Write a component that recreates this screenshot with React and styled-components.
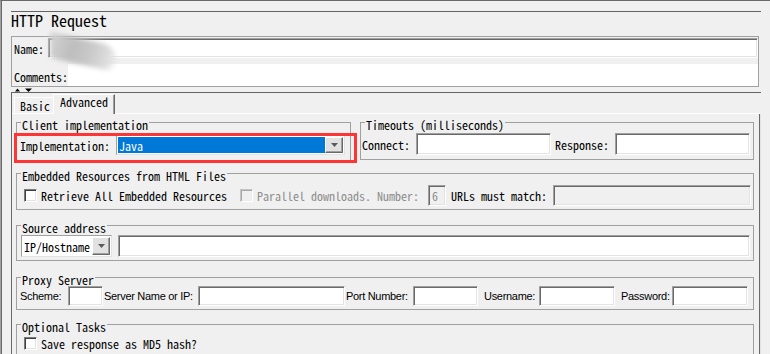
import React from "react";
import styled, { createGlobalStyle, css } from "styled-components";

const MONO = `"Noto Sans Mono CJK SC", "Noto Sans Mono CJK JP", "Liberation Mono", monospace`;
const SANS = `"Liberation Sans", Arial, sans-serif`;

const mono = css`
  font-family: ${MONO};
  font-size: 12px;
  white-space: nowrap;
`;

const sunken = css`
  border: 1px solid;
  border-color: #a0a0a0 #ffffff #ffffff #a0a0a0;
  box-shadow: inset 1px 1px 0 #696969, inset -1px -1px 0 #e3e3e3;
`;

const GlobalStyle = createGlobalStyle`
  html, body { margin: 0; padding: 0; background: #f0f0f0; }
  body { overflow: hidden; color: #000; font-family: ${MONO}; }
  *, *::before, *::after { box-sizing: border-box; }
`;

const Frame = styled.div`
  width: 770px;
  height: 354px;
  overflow: hidden;
  display: flex;
  flex-direction: column;
  padding: 10px 9px 0 10px;
  border-top: 1px solid #696969;
  border-left: 1px solid #a0a0a0;
  box-shadow: inset 1px 0 0 #696969;
  background: #f0f0f0;
`;

const TitleBar = styled.div`
  flex: none;
  height: 25px;
  border-top: 1px solid #646464;
  font-family: ${MONO};
  font-size: 16px;
  line-height: 16px;
  white-space: nowrap;
`;

const NamePanel = styled.div`
  position: relative;
  flex: none;
  width: 748px;
  height: 51px;
  border: 1px solid #a0a0a0;
  padding-top: 1px;
  display: flex;
  flex-direction: column;
  gap: 6px;
`;

const FieldRow = styled.div`
  display: flex;
  align-items: center;
  height: ${(p) => p.$h}px;
`;

const Label = styled.span`
  ${mono};
  flex: none;
  line-height: 13px;
  margin: 0 ${(p) => p.$mr ?? 6}px 0 ${(p) => p.$ml ?? 0}px;
  padding-top: ${(p) => p.$pt || 0}px;
  color: ${(p) => (p.$disabled ? "#8d8d8d" : "#000")};
`;

const TextField = styled.div`
  ${sunken};
  flex: ${(p) => (p.$w ? "none" : 1)};
  width: ${(p) => (p.$w ? `${p.$w}px` : "auto")};
  height: ${(p) => p.$h || 22}px;
  margin-left: ${(p) => p.$ml || 0}px;
  background: ${(p) => (p.$disabled ? "#f0f0f0" : "#fff")};
  ${mono};
  line-height: 13px;
  color: #8d8d8d;
  display: flex;
  align-items: center;
  padding-left: 3px;
`;

const CommentsArea = styled.div`
  flex: 1;
  height: 100%;
  background: #fff;
`;

const Smudge = styled.div`
  position: absolute;
  left: 38px;
  top: 2px;
  width: 66px;
  height: 26px;
  background: linear-gradient(
    105deg,
    #d4d4d4 0%,
    #bdbdbd 35%,
    #c9c9c9 60%,
    #dedede 85%,
    rgba(255, 255, 255, 0) 100%
  );
  border-radius: 8px 30px 30px 8px;
  filter: blur(2.5px);
  transform: skewY(12deg);
  pointer-events: none;
`;

const SplitBar = styled.div`
  flex: none;
  height: 6px;
  border-bottom: 1px solid #646464;
  padding: 1px 0 0 4px;
  display: flex;
`;

const TabArea = styled.div`
  flex: 1;
  min-height: 0;
  display: flex;
  flex-direction: column;
  border-left: 1px solid #696969;
`;

const TabStrip = styled.div`
  flex: none;
  height: 20px;
  display: flex;
  align-items: flex-end;
  padding-left: 2px;
  position: relative;
  z-index: 1;
`;

const Tab = styled.div`
  ${mono};
  line-height: 13px;
  background: #f0f0f0;
  border-top: 1px solid #fff;
  border-left: 1px solid #fff;
  ${(p) =>
    p.$active
      ? css`
          height: 20px;
          margin-bottom: -1px;
          padding: 0 6px 0 6px;
          border-right: 1px solid #696969;
          box-shadow: inset -1px 0 0 #a0a0a0;
        `
      : css`
          height: 16px;
          padding: 1px 3px 0 5px;
        `}
`;

const TabContent = styled.div`
  flex: 1;
  border-top: 1px solid #fff;
  border-right: 1px solid #e3e3e3;
  box-shadow: inset -1px 0 0 #696969;
  padding: 0 6px 0 4px;
  display: flex;
  flex-direction: column;
`;

const TopRow = styled.div`
  position: relative;
  display: flex;
  align-items: flex-start;
  gap: 9px;
`;

const Group = styled.fieldset`
  margin: ${(p) => p.$mt || 0}px 0 0;
  padding: 0;
  border: 1px solid #a0a0a0;
  min-width: 0;
  flex: none;
  width: ${(p) => (p.$w ? `${p.$w}px` : "auto")};
`;

const Legend = styled.legend`
  ${mono};
  margin-left: 4px;
  padding: 5px 1px 0;
  line-height: 12px;
`;

const GroupBody = styled.div`
  display: flex;
  align-items: center;
  padding: ${(p) => p.$p};
`;

const Highlight = styled.div`
  position: absolute;
  left: -2px;
  top: 19px;
  width: 343px;
  height: 30px;
  border: 3px solid #ff3535;
  pointer-events: none;
`;

const Combo = styled.div`
  flex: none;
  width: ${(p) => p.$w}px;
  height: ${(p) => p.$h}px;
  border: 1px solid;
  border-color: #a0a0a0 #e3e3e3 #e3e3e3 #a0a0a0;
  padding: 1px;
  background: #fff;
  display: flex;
`;

const ComboValue = styled.div`
  flex: 1;
  ${mono};
  line-height: 13px;
  display: flex;
  align-items: center;
  padding-left: 1px;
  background: ${(p) => (p.$selected ? "#0078d7" : "#fff")};
  color: ${(p) => (p.$selected ? "#fff" : "#000")};
`;

const ComboButton = styled.div`
  flex: none;
  width: 18px;
  background: #e1e1e1;
  border: 1px solid;
  border-color: #fff #696969 #696969 #fff;
  box-shadow: inset -1px -1px 0 #a0a0a0;
  display: flex;
  align-items: center;
  justify-content: center;
`;

const Check = styled.span`
  flex: none;
  width: 13px;
  height: 13px;
  margin-right: 4px;
  border: 1px solid;
  ${(p) =>
    p.$disabled
      ? css`
          border-color: #c4c4c4 #fff #fff #c4c4c4;
          box-shadow: inset 1px 1px 0 #a8a8a8, inset -1px -1px 0 #ececec;
          background: #f0f0f0;
        `
      : css`
          border-color: #7a7a7a #fff #fff #7a7a7a;
          box-shadow: inset 1px 1px 0 #404040, inset -1px -1px 0 #e3e3e3;
          background: #fff;
        `}
`;

const ProxyBody = styled.div`
  display: grid;
  grid-template-columns: 48px 35px 95px 147px 68px 65px 61px 76px 57px 76px;
  align-items: center;
  padding: 0 5px 3px 3px;
`;

const SansLabel = styled.span`
  font-family: ${SANS};
  font-size: 11px;
  letter-spacing: -0.3px;
  white-space: nowrap;
  padding-left: ${(p) => p.$indent || 0}px;
`;

const Arrow = () => (
  <svg width="7" height="4" viewBox="0 0 7 4">
    <polygon points="0,0 7,0 3.5,4" fill="#5a5a5a" />
  </svg>
);

const SplitArrows = () => (
  <svg width="20" height="5" viewBox="0 0 20 5">
    <polygon points="0,3.5 2.5,0.5 5,3.5" fill="#000" />
    <polygon points="10,0.5 17,0.5 13.5,4" fill="#000" />
  </svg>
);

export default function App() {
  return (
    <>
      <GlobalStyle />
      <Frame>
        <TitleBar>HTTP Request</TitleBar>
        <NamePanel>
          <FieldRow $h={20}>
            <Label $ml={2} $mr={4}>
              Name:
            </Label>
            <TextField $h={20} />
          </FieldRow>
          <FieldRow $h={22}>
            <Label $ml={2} $mr={0} $pt={3}>
              Comments:
            </Label>
            <CommentsArea />
          </FieldRow>
          <Smudge />
        </NamePanel>
        <SplitBar>
          <SplitArrows />
        </SplitBar>
        <TabArea>
          <TabStrip>
            <Tab>Basic</Tab>
            <Tab $active>Advanced</Tab>
          </TabStrip>
          <TabContent>
            <TopRow>
              <Group $w={335}>
                <Legend>Client implementation</Legend>
                <GroupBody $p="4px 5px 6px 3px">
                  <Label $mr={6}>Implementation:</Label>
                  <Combo $w={229} $h={20}>
                    <ComboValue $selected>Java</ComboValue>
                    <ComboButton>
                      <Arrow />
                    </ComboButton>
                  </Combo>
                </GroupBody>
              </Group>
              <Group $w={394}>
                <Legend>Timeouts (milliseconds)</Legend>
                <GroupBody $p="2px 3px 4px 1px">
                  <Label $mr={6}>Connect:</Label>
                  <TextField $w={135} $h={22} />
                  <Label $ml={4} $mr={6}>
                    Response:
                  </Label>
                  <TextField $w={135} $h={22} />
                </GroupBody>
              </Group>
              <Highlight />
            </TopRow>

            <Group $mt={3}>
              <Legend>Embedded Resources from HTML Files</Legend>
              <GroupBody $p="3px 2px 3px 7px">
                <Check />
                <Label $mr={13}>Retrieve All Embedded Resources</Label>
                <Check $disabled />
                <Label $disabled $mr={9}>
                  Parallel downloads. Number:
                </Label>
                <TextField $w={18} $h={21} $disabled>
                  6
                </TextField>
                <Label $ml={5} $mr={6}>
                  URLs must match:
                </Label>
                <TextField $h={21} $disabled />
              </GroupBody>
            </Group>

            <Group $mt={7}>
              <Legend>Source address</Legend>
              <GroupBody $p="1px 3px 3px 4px">
                <Combo $w={91} $h={22}>
                  <ComboValue>IP/Hostname</ComboValue>
                  <ComboButton>
                    <Arrow />
                  </ComboButton>
                </Combo>
                <TextField $h={22} $ml={6} />
              </GroupBody>
            </Group>

            <Group $mt={8}>
              <Legend>Proxy Server</Legend>
              <ProxyBody>
                <SansLabel>Scheme:</SansLabel>
                <TextField $h={20} />
                <SansLabel $indent={1}>Server Name or IP:</SansLabel>
                <TextField $h={20} />
                <SansLabel $indent={1}>Port Number:</SansLabel>
                <TextField $h={20} />
                <SansLabel $indent={6}>Username:</SansLabel>
                <TextField $h={20} />
                <SansLabel $indent={6}>Password:</SansLabel>
                <TextField $h={20} />
              </ProxyBody>
            </Group>

            <Group $mt={6}>
              <Legend>Optional Tasks</Legend>
              <GroupBody $p="4px 3px 20px 7px">
                <Check />
                <Label>Save response as MD5 hash?</Label>
              </GroupBody>
            </Group>
          </TabContent>
        </TabArea>
      </Frame>
    </>
  );
}
